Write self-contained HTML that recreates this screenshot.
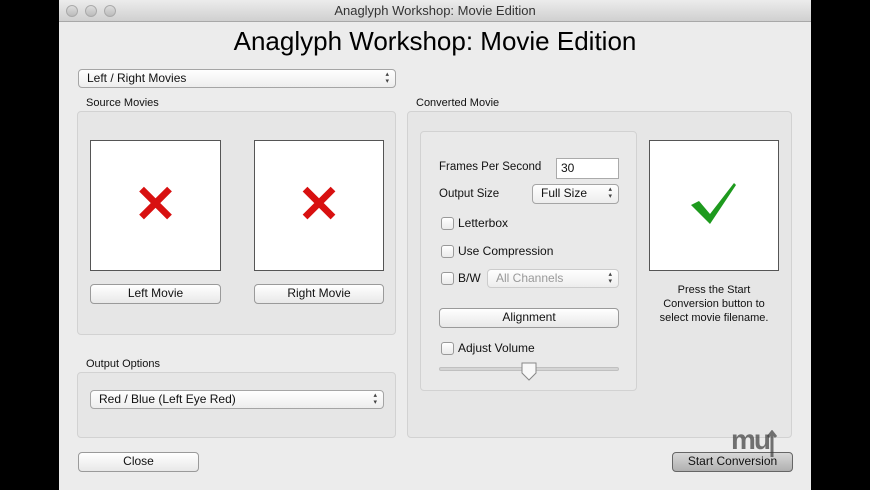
<!DOCTYPE html>
<html><head><style>
*{margin:0;padding:0;box-sizing:border-box}
body{width:870px;height:490px;background:#000;position:relative;overflow:hidden;font-family:"Liberation Sans",sans-serif;font-size:12px;color:#111}
.a{position:absolute}
#win{left:59px;top:0;width:752px;height:490px;background:#ececec}
#tb{left:0;top:0;width:752px;height:22px;background:linear-gradient(#ececec,#d0d0d0);border-bottom:1px solid #a8a8a8;text-align:center;line-height:22px;font-size:13px;color:#333}
.dot{top:5px;width:12px;height:12px;border-radius:50%;background:linear-gradient(#ddd,#bbb);border:1px solid #aaa}
.grp{background:#e6e6e6;border:1px solid #d2d2d2;border-radius:4px}
.btn{background:linear-gradient(#fff,#e8e8e8);border:1px solid #9a9a9a;border-radius:4px;text-align:center;font-size:12px;line-height:17px}
.pop{background:linear-gradient(#fff,#ededed);border:1px solid #a5a5a5;border-radius:4px;font-size:12px;line-height:17px;padding-left:8px}
.pop:after{content:"\25B4\A\25BE";white-space:pre;position:absolute;right:6px;top:1px;font-size:7px;line-height:7px;color:#444}
.box{background:#fff;border:1px solid #555}
.cb{width:13px;height:13px;border:1px solid #999;border-radius:3px;background:linear-gradient(#fff,#eaeaea)}
.x{font-size:52px;color:#d81010;font-weight:bold;text-align:center;line-height:128px;width:100%}
</style></head><body>
<div id="win" class="a">
<div id="tb" class="a">Anaglyph Workshop: Movie Edition</div>
<div class="a dot" style="left:7px"></div><div class="a dot" style="left:26px"></div><div class="a dot" style="left:45px"></div>
<div class="a" style="left:0;width:752px;top:23px;text-align:center;font-size:26px;line-height:36px;color:#000">Anaglyph Workshop: Movie Edition</div>
<div class="a pop" style="left:19px;top:69px;width:318px;height:19px">Left / Right Movies</div>
<div class="a" style="left:27px;top:97px;font-size:11px">Source Movies</div>
<div class="a grp" style="left:18px;top:111px;width:319px;height:224px"></div>
<div class="a box" style="left:31px;top:140px;width:131px;height:131px"><div class="x">✕</div></div>
<div class="a box" style="left:195px;top:140px;width:130px;height:131px"><div class="x">✕</div></div>
<div class="a btn" style="left:31px;top:284px;width:131px;height:20px">Left Movie</div>
<div class="a btn" style="left:195px;top:284px;width:130px;height:20px">Right Movie</div>
<div class="a" style="left:27px;top:358px;font-size:11px">Output Options</div>
<div class="a grp" style="left:18px;top:372px;width:319px;height:66px"></div>
<div class="a pop" style="left:31px;top:390px;width:294px;height:19px">Red / Blue (Left Eye Red)</div>
<div class="a" style="left:357px;top:97px;font-size:11px">Converted Movie</div>
<div class="a grp" style="left:348px;top:111px;width:385px;height:327px"></div>
<div class="a grp" style="left:361px;top:131px;width:217px;height:260px;background:#e9e9e9"></div>
<div class="a" style="left:380px;top:161px;font-size:11.5px">Frames Per Second</div>
<div class="a" style="left:497px;top:158px;width:63px;height:21px;background:#fff;border:1px solid #aaa;padding-left:4px;line-height:19px">30</div>
<div class="a" style="left:380px;top:188px;font-size:11.5px">Output Size</div>
<div class="a pop" style="left:473px;top:184px;width:87px;height:20px">Full Size</div>
<div class="a cb" style="left:382px;top:217px"></div><div class="a" style="left:399px;top:216px">Letterbox</div>
<div class="a cb" style="left:382px;top:245px"></div><div class="a" style="left:399px;top:244px">Use Compression</div>
<div class="a cb" style="left:382px;top:272px"></div><div class="a" style="left:399px;top:271px">B/W</div>
<div class="a pop" style="left:428px;top:269px;width:132px;height:19px;color:#999;border-color:#ccc">All Channels</div>
<div class="a btn" style="left:380px;top:308px;width:180px;height:20px">Alignment</div>
<div class="a cb" style="left:382px;top:342px"></div><div class="a" style="left:399px;top:341px">Adjust Volume</div>
<div class="a" style="left:380px;top:367px;width:180px;height:4px;background:#d4d4d4;border-radius:2px;border:1px solid #c0c0c0"></div>
<svg class="a" style="left:461px;top:362px" width="18" height="20"><path d="M2 1H16V11L9 18L2 11Z" fill="#f8f8f8" stroke="#888"/></svg>
<div class="a box" style="left:590px;top:140px;width:130px;height:131px"><svg width="128" height="129"><path d="M41 64L49 60L60 73L84 42L86 44L60 83Z" fill="#1e9a1e"/></svg></div>
<div class="a" style="left:580px;top:283px;width:150px;text-align:center;font-size:11px;line-height:14px">Press the Start<br>Conversion button to<br>select movie filename.</div>
<div class="a btn" style="left:19px;top:452px;width:121px;height:20px">Close</div>
<div class="a btn" style="left:613px;top:452px;width:121px;height:20px;background:linear-gradient(#d8d8d8,#b0b0b0);border-color:#666">Start Conversion</div>
<div class="a" style="left:672px;top:425px;font-size:28px;font-weight:bold;color:rgba(60,60,60,.7);letter-spacing:-2px;line-height:30px">mu</div>
<svg class="a" style="left:706px;top:430px" width="14" height="28"><path d="M7 27V3M3 7L7 2L11 7" stroke="rgba(60,60,60,.7)" stroke-width="3" fill="none"/></svg>
</div>
</body></html>
